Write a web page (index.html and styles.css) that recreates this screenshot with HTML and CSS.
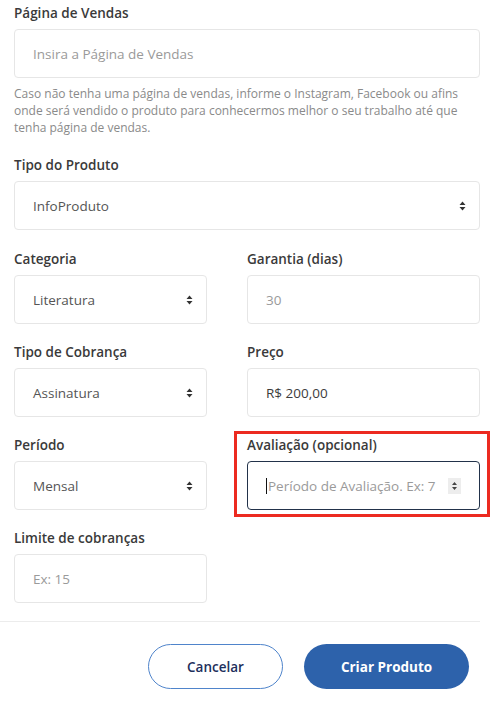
FILE: index.html
```html
<!DOCTYPE html>
<html lang="pt-BR">
<head>
<meta charset="utf-8">
<title>Criar Produto</title>
<link rel="stylesheet" href="styles.css">
</head>
<body>
<form class="form">
  <div class="group">
    <label class="label">Página de Vendas</label>
    <div class="field"><span class="ph">Insira a Página de Vendas</span></div>
    <p class="help">Caso não tenha uma página de vendas, informe o Instagram, Facebook ou afins onde será vendido o produto para conhecermos melhor o seu trabalho até que tenha página de vendas.</p>
  </div>

  <div class="group">
    <label class="label">Tipo do Produto</label>
    <div class="field select"><span class="val">InfoProduto</span>
      <svg class="arrows" width="7" height="10" viewBox="0 0 7 10"><path d="M3.5 0.5 L6.5 4 L0.5 4 Z M0.5 6 L6.5 6 L3.5 9.5 Z" fill="#333"/></svg>
    </div>
  </div>

  <div class="grid">
    <div class="group">
      <label class="label">Categoria</label>
      <div class="field select"><span class="val">Literatura</span>
        <svg class="arrows" width="7" height="10" viewBox="0 0 7 10"><path d="M3.5 0.5 L6.5 4 L0.5 4 Z M0.5 6 L6.5 6 L3.5 9.5 Z" fill="#333"/></svg>
      </div>
    </div>
    <div class="group">
      <label class="label">Garantia (dias)</label>
      <div class="field"><span class="ph">30</span></div>
    </div>

    <div class="group">
      <label class="label">Tipo de Cobrança</label>
      <div class="field select"><span class="val">Assinatura</span>
        <svg class="arrows" width="7" height="10" viewBox="0 0 7 10"><path d="M3.5 0.5 L6.5 4 L0.5 4 Z M0.5 6 L6.5 6 L3.5 9.5 Z" fill="#333"/></svg>
      </div>
    </div>
    <div class="group">
      <label class="label">Preço</label>
      <div class="field"><span class="val dark">R$ 200,00</span></div>
    </div>

    <div class="group">
      <label class="label">Período</label>
      <div class="field select"><span class="val">Mensal</span>
        <svg class="arrows" width="7" height="10" viewBox="0 0 7 10"><path d="M3.5 0.5 L6.5 4 L0.5 4 Z M0.5 6 L6.5 6 L3.5 9.5 Z" fill="#333"/></svg>
      </div>
    </div>
    <div class="group highlight">
      <label class="label">Avaliação (opcional)</label>
      <div class="field focus"><span class="caret"></span><span class="ph">Período de Avaliação. Ex: 7</span>
        <span class="spin"><svg width="7" height="10" viewBox="0 0 7 10"><path d="M3.5 1 L6 4 L1 4 Z M1 6 L6 6 L3.5 9 Z" fill="#444"/></svg></span>
      </div>
    </div>

    <div class="group">
      <label class="label">Limite de cobranças</label>
      <div class="field"><span class="ph">Ex: 15</span></div>
    </div>
  </div>

  <hr class="divider">

  <div class="actions">
    <button type="button" class="btn outline">Cancelar</button>
    <button type="button" class="btn primary">Criar Produto</button>
  </div>
</form>
</body>
</html>
```
FILE: styles.css
```css
html, body {
  margin: 0;
  padding: 0;
  background: #ffffff;
}
body {
  font-family: "Open Sans", "Noto Sans", sans-serif;
  color: #333;
}
.form {
  padding: 5px 12px 0 14px;
}
.group {
  display: flex;
  flex-direction: column;
}
.group + .group,
.group + .grid {
  margin-top: 21px;
}
.label {
  font-size: 13.5px;
  font-weight: 600;
  line-height: 16px;
  color: #3a3a3a;
  margin-bottom: 8px;
}
.field {
  height: 49px;
  box-sizing: border-box;
  border: 1px solid #e6e6e6;
  border-radius: 4px;
  background: #fff;
  display: flex;
  align-items: center;
  padding: 0 13px 0 18px;
  font-size: 13.5px;
}
.ph { color: #9a9a9a; flex: 1; }
.val { color: #555; flex: 1; }
.val.dark { color: #3c3c3c; }
.arrows { flex: none; }
.help {
  margin: 7px 0 0;
  font-size: 12px;
  line-height: 17px;
  color: #8a8a8a;
}
.grid {
  display: grid;
  grid-template-columns: 193px 233px;
  column-gap: 40px;
  row-gap: 20px;
}
.grid .group + .group { margin-top: 0; }
.highlight { position: relative; }
.highlight::after {
  content: "";
  position: absolute;
  left: -13px;
  right: -10px;
  top: -6px;
  bottom: -7px;
  border: 3px solid #ec2a20;
  pointer-events: none;
}
.field.focus {
  border-color: #22324a;
  padding-left: 18px;
  padding-right: 18px;
}
.caret {
  width: 1px;
  height: 16px;
  background: #111;
  margin-right: 1px;
  flex: none;
}
.spin {
  width: 13px;
  height: 16px;
  background: #ededed;
  display: flex;
  align-items: center;
  justify-content: center;
  flex: none;
}
.divider {
  border: 0;
  border-top: 1px solid #ececec;
  margin: 18px 0 0 -14px;
  width: 480px;
}
.actions {
  display: flex;
  justify-content: flex-end;
  gap: 21px;
  margin-top: 22px;
  padding-right: 11px;
}
.btn {
  height: 45px;
  border-radius: 23px;
  font-family: "Open Sans", sans-serif;
  font-size: 13.5px;
  font-weight: 700;
  cursor: pointer;
}
.btn.outline {
  width: 135px;
  background: #fff;
  border: 1px solid #4f84cb;
  color: #1d2f5c;
  font-weight: 600;
}
.btn.primary {
  width: 165px;
  background: #2d62ab;
  border: 0;
  color: #fff;
}
```
